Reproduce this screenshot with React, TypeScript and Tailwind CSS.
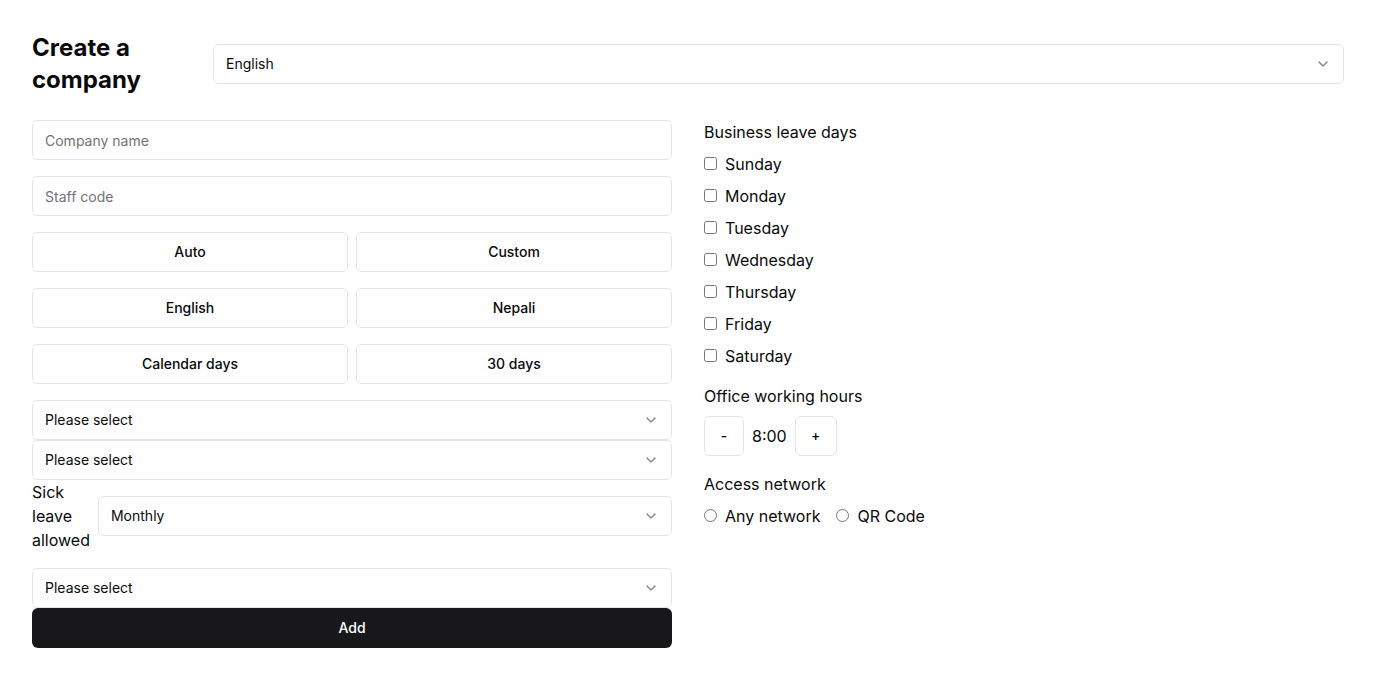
import React, { useState } from 'react';
import { ChevronDown } from 'lucide-react';

const days = ['Sunday', 'Monday', 'Tuesday', 'Wednesday', 'Thursday', 'Friday', 'Saturday'];

function Select({ value }: { value: string }) {
  return (
    <button className="w-full h-10 flex items-center justify-between rounded-md border border-zinc-200 bg-white px-3 text-sm text-zinc-950">
      <span>{value}</span>
      <ChevronDown className="w-4 h-4 opacity-50" />
    </button>
  );
}

function Toggle({ label }: { label: string }) {
  return (
    <button className="h-10 flex-1 rounded-md border border-zinc-200 bg-white text-sm font-medium text-zinc-950">
      {label}
    </button>
  );
}

export default function App() {
  const [hours, setHours] = useState(8);

  return (
    <div className="min-h-screen bg-white p-8 text-zinc-950" style={{ fontFamily: 'Inter, "Noto Sans", sans-serif' }}>
      <div className="flex items-center gap-4">
        <h1 className="w-[165px] shrink-0 text-2xl font-bold leading-8">Create a company</h1>
        <Select value="English" />
      </div>

      <div className="mt-6 grid grid-cols-2 gap-8">
        <div className="flex flex-col">
          <div className="space-y-4">
            <input
              placeholder="Company name"
              className="w-full h-10 rounded-md border border-zinc-200 px-3 text-sm outline-none placeholder:text-zinc-500"
            />
            <input
              placeholder="Staff code"
              className="w-full h-10 rounded-md border border-zinc-200 px-3 text-sm outline-none placeholder:text-zinc-500"
            />
            <div className="flex gap-2">
              <Toggle label="Auto" />
              <Toggle label="Custom" />
            </div>
            <div className="flex gap-2">
              <Toggle label="English" />
              <Toggle label="Nepali" />
            </div>
            <div className="flex gap-2">
              <Toggle label="Calendar days" />
              <Toggle label="30 days" />
            </div>
            <div>
              <Select value="Please select" />
              <Select value="Please select" />
              <div className="flex items-center gap-2">
                <label className="w-min text-base leading-6">Sick leave allowed</label>
                <div className="flex-1">
                  <Select value="Monthly" />
                </div>
              </div>
            </div>
            <div>
              <Select value="Please select" />
              <button className="w-full h-10 rounded-md bg-zinc-900 text-sm font-medium text-white">Add</button>
            </div>
          </div>
        </div>

        <div className="flex flex-col">
          <p className="text-base leading-6">Business leave days</p>
          <div className="mt-1 flex flex-col">
            {days.map((d) => (
              <label key={d} className="h-8 flex items-center gap-2 text-base">
                <input type="checkbox" className="w-[13px] h-[13px] m-0 -translate-y-px" />
                <span>{d}</span>
              </label>
            ))}
          </div>
          <p className="mt-3 text-base leading-6">Office working hours</p>
          <div className="mt-2 flex items-center gap-2">
            <button
              onClick={() => setHours((h) => Math.max(0, h - 1))}
              className="w-10 h-10 rounded-md border border-zinc-200 text-sm font-medium"
            >
              -
            </button>
            <span className="text-base">{hours}:00</span>
            <button
              onClick={() => setHours((h) => h + 1)}
              className="w-[42px] h-10 rounded-md border border-zinc-200 text-sm font-medium"
            >
              +
            </button>
          </div>
          <p className="mt-4 text-base leading-6">Access network</p>
          <div className="mt-2 flex items-center gap-4 h-6">
            <label className="flex items-center gap-2 text-base">
              <input type="radio" name="net" className="w-[13px] h-[13px] m-0 -translate-y-px" />
              <span>Any network</span>
            </label>
            <label className="flex items-center gap-2 text-base">
              <input type="radio" name="net" className="w-[13px] h-[13px] m-0 -translate-y-px" />
              <span>QR Code</span>
            </label>
          </div>
        </div>
      </div>
    </div>
  );
}
